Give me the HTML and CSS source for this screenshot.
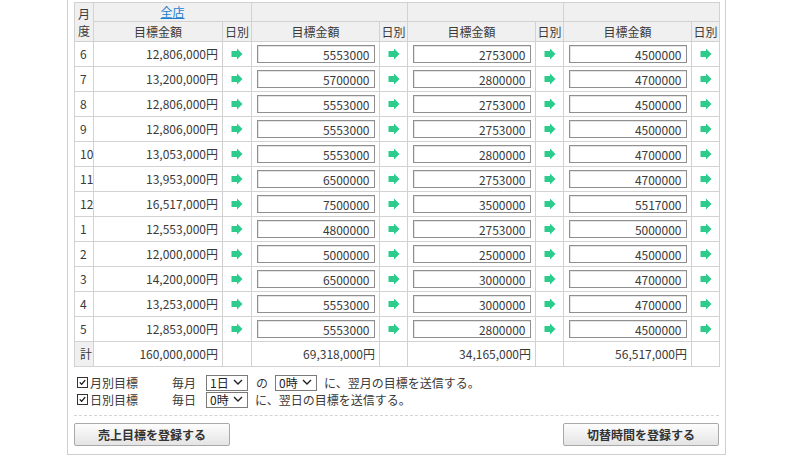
FILE: index.html
```html
<!DOCTYPE html>
<html lang="ja">
<head>
<meta charset="utf-8">
<title>売上目標</title>
<link rel="stylesheet" href="styles.css">
</head>
<body>
<div class="panel">
  <table class="grid">
    <colgroup>
      <col class="c-month"><col class="c-amt"><col class="c-day">
      <col class="c-amt2"><col class="c-day2">
      <col class="c-amt2"><col class="c-day2">
      <col class="c-amt2"><col class="c-day2">
    </colgroup>
    <thead>
      <tr class="h1">
        <th rowspan="2" class="month-h"><span class="mh">月</span><span class="mh">度</span></th>
        <th colspan="2"><a href="#" class="store-link">全店</a></th>
        <th colspan="2"></th>
        <th colspan="2"></th>
        <th colspan="2"></th>
      </tr>
      <tr class="h2">
        <th>目標金額</th><th>日別</th>
        <th>目標金額</th><th>日別</th>
        <th>目標金額</th><th>日別</th>
        <th>目標金額</th><th>日別</th>
      </tr>
    </thead>
    <tbody id="rows"></tbody>
    <tfoot>
      <tr class="total">
        <th class="m">計</th>
        <td class="num">160,000,000円</td><td></td>
        <td class="num">69,318,000円</td><td></td>
        <td class="num">34,165,000円</td><td></td>
        <td class="num">56,517,000円</td><td></td>
      </tr>
    </tfoot>
  </table>

  <div class="options">
    <label class="opt-label"><span class="cb"><svg viewBox="0 0 11 11" width="11" height="11"><path d="M2.2 5.4 L4.4 7.8 L8.8 2.6" fill="none" stroke="#111" stroke-width="1.6"/></svg></span>月別目標</label>
    <div class="opt-line">
      <span>毎月</span>
      <span class="sel first"><select><option>1日</option></select><svg viewBox="0 0 10 6" width="10" height="6"><path d="M1 1 L5 5 L9 1" fill="none" stroke="#222" stroke-width="1.4"/></svg></span>
      <span class="no">の</span>
      <span class="sel"><select><option>0時</option></select><svg viewBox="0 0 10 6" width="10" height="6"><path d="M1 1 L5 5 L9 1" fill="none" stroke="#222" stroke-width="1.4"/></svg></span>
      <span>に、翌月の目標を送信する。</span>
    </div>
    <label class="opt-label"><span class="cb"><svg viewBox="0 0 11 11" width="11" height="11"><path d="M2.2 5.4 L4.4 7.8 L8.8 2.6" fill="none" stroke="#111" stroke-width="1.6"/></svg></span>日別目標</label>
    <div class="opt-line">
      <span>毎日</span>
      <span class="sel first"><select><option>0時</option></select><svg viewBox="0 0 10 6" width="10" height="6"><path d="M1 1 L5 5 L9 1" fill="none" stroke="#222" stroke-width="1.4"/></svg></span>
      <span>に、翌日の目標を送信する。</span>
    </div>
  </div>

  <div class="actions">
    <button class="btn">売上目標を登録する</button>
    <button class="btn">切替時間を登録する</button>
  </div>
</div>
<script src="app.js"></script>
</body>
</html>
```

FILE: app.js
```js
var data = [
  ["6","12,806,000円","5553000","2753000","4500000"],
  ["7","13,200,000円","5700000","2800000","4700000"],
  ["8","12,806,000円","5553000","2753000","4500000"],
  ["9","12,806,000円","5553000","2753000","4500000"],
  ["10","13,053,000円","5553000","2800000","4700000"],
  ["11","13,953,000円","6500000","2753000","4700000"],
  ["12","16,517,000円","7500000","3500000","5517000"],
  ["1","12,553,000円","4800000","2753000","5000000"],
  ["2","12,000,000円","5000000","2500000","4500000"],
  ["3","14,200,000円","6500000","3000000","4700000"],
  ["4","13,253,000円","5553000","3000000","4700000"],
  ["5","12,853,000円","5553000","2800000","4500000"]
];
var arrow = '<svg class="arrow" viewBox="0 0 12 12" width="12" height="12"><path d="M0.5 3 H6 V0.5 L11.5 6 L6 11.5 V9 H0.5 Z" fill="#2dcc8c"/></svg>';
var html = "";
data.forEach(function (r) {
  html += '<tr><td class="m">' + r[0] + '</td>' +
    '<td class="num">' + r[1] + '</td><td class="day">' + arrow + '</td>';
  for (var i = 2; i < 5; i++) {
    html += '<td class="in"><input type="text" value="' + r[i] + '"></td><td class="day">' + arrow + '</td>';
  }
  html += '</tr>';
});
document.getElementById("rows").innerHTML = html;
```

FILE: styles.css
```css
html, body {
  margin: 0;
  padding: 0;
  background: #fff;
}
body {
  font-family: "Noto Sans CJK JP", "DejaVu Sans", sans-serif;
  font-size: 12px;
  color: #3a3a3a;
}
.panel {
  margin-left: 67px;
  width: 645px;
  border: 1px solid #cfcfcf;
  border-top: none;
  padding: 2px 6px 8px 6px;
}
.grid {
  border-collapse: collapse;
  table-layout: fixed;
  width: 646px;
  border: 1px solid #c4c4c4;
}
.c-month { width: 19px; }
.c-amt { width: 129px; }
.c-day { width: 29px; }
.c-amt2 { width: 128px; }
.c-day2 { width: 28px; }
.grid th, .grid td {
  border: 1px solid #d2d2d2;
  padding: 0;
  font-weight: normal;
  line-height: 14px;
}
.grid thead th {
  background: #f0f0f0;
  text-align: center;
  color: #3a3a3a;
}
.h1 th { height: 18px; }
.h2 th { height: 19px; }
.month-h .mh {
  display: block;
  line-height: 17px;
}
.store-link {
  color: #1d7fd0;
  text-decoration: underline;
}
.grid tbody tr, .grid tfoot tr { height: 25px; }
.grid td.m {
  text-align: left;
  padding-left: 5px;
  background: #fff;
}
.grid th.m {
  background: #f0f0f0;
  text-align: left;
  padding-left: 5px;
}
.grid td.num {
  text-align: right;
  padding-right: 4px;
  white-space: nowrap;
}
.grid td.day {
  text-align: center;
}
.arrow {
  display: block;
  margin: 0 auto;
}
.grid td.in {
  padding: 0 4px 0 4px;
}
.grid td.in input {
  display: block;
  box-sizing: border-box;
  width: 118px;
  height: 18px;
  margin: 0 auto;
  border: 1px solid #8f8f8f;
  box-shadow: inset 1px 1px 0 #e4e4e4;
  padding: 0 4px 0 0;
  text-align: right;
  font: inherit;
  font-size: 12px;
  color: #3a3a3a;
  background: #fff;
}
.options {
  display: grid;
  grid-template-columns: 98px 1fr;
  row-gap: 1px;
  margin-top: 7px;
  padding-bottom: 8px;
  border-bottom: 1px dashed #d4d4d4;
}
.opt-label {
  display: flex;
  align-items: center;
  gap: 2px;
  padding-left: 3px;
  height: 16px;
}
.cb {
  display: inline-flex;
  box-sizing: border-box;
  width: 11px;
  height: 11px;
  border: 1px solid #333;
  background: #fff;
  align-items: center;
  justify-content: center;
}
.cb svg { display: block; }
.opt-line {
  display: flex;
  align-items: center;
  gap: 7px;
  height: 16px;
}
.opt-line .first { margin-left: 3px; }
.opt-line .no { margin-left: 1px; }
.sel {
  position: relative;
  display: inline-block;
  width: 42px;
  height: 16px;
}
.sel select {
  appearance: none;
  -webkit-appearance: none;
  box-sizing: border-box;
  width: 42px;
  height: 16px;
  border: 1px solid #7a7a7a;
  border-radius: 0;
  background: #fff;
  padding: 0 0 0 3px;
  font: inherit;
  font-size: 12px;
  line-height: 14px;
  color: #222;
}
.sel svg {
  position: absolute;
  right: 5px;
  top: 5px;
  pointer-events: none;
}
.actions {
  display: flex;
  justify-content: space-between;
  margin-top: 7px;
}
.btn {
  width: 156px;
  height: 23px;
  border: 1px solid #a9a9a9;
  border-radius: 2px;
  background: linear-gradient(#fdfdfd, #e4e4e4);
  font-family: "Noto Sans CJK JP", sans-serif;
  font-weight: bold;
  font-size: 12px;
  color: #333;
  padding: 0;
}
```
